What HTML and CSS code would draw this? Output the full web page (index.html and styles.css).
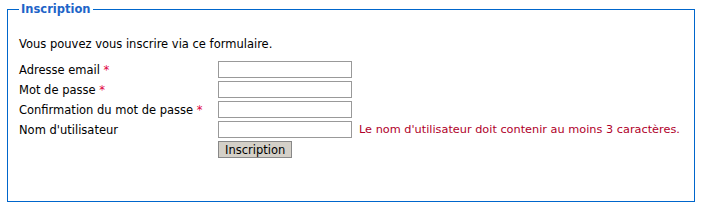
FILE: index.html
```html
<!DOCTYPE html>
<html lang="fr">
<head>
    <meta charset="UTF-8">
    <title>Inscription</title>
    <link rel="stylesheet" href="styles.css">
</head>
<body>
    <form class="signup" action="#" method="post">
        <fieldset class="box">
            <legend class="box-title">Inscription</legend>

            <p class="intro">Vous pouvez vous inscrire via ce formulaire.</p>

            <div class="fields">
                <label class="label" for="email">Adresse email <span class="req">*</span></label>
                <input class="field" type="text" id="email" name="email">
                <span></span>

                <label class="label" for="pass">Mot de passe <span class="req">*</span></label>
                <input class="field" type="password" id="pass" name="pass">
                <span></span>

                <label class="label" for="pass2">Confirmation du mot de passe <span class="req">*</span></label>
                <input class="field" type="password" id="pass2" name="pass2">
                <span></span>

                <label class="label" for="login">Nom d'utilisateur</label>
                <input class="field" type="text" id="login" name="login">
                <span class="error">Le nom d'utilisateur doit contenir au moins 3 caractères.</span>

                <span></span>
                <div><button class="submit" type="submit">Inscription</button></div>
                <span></span>
            </div>
        </fieldset>
    </form>
</body>
</html>
```

FILE: styles.css
```css
* {
    margin: 0;
    padding: 0;
    box-sizing: border-box;
}

body {
    font-family: Verdana, "DejaVu Sans", sans-serif;
    font-size: 11.5px;
    color: #000;
    background: #fff;
    padding: 2px 10px 0 7px;
}

.box {
    border: 1px solid #0066cc;
    min-width: 0;
    height: 200px;
    padding: 0 11px 0 11px;
}

.box-title {
    color: #1e64c8;
    font-weight: bold;
    font-size: 11.5px;
    padding: 0 2px;
    margin-left: 0;
}

.intro {
    margin-top: 21px;
    line-height: 14px;
}

.fields {
    margin-top: 10px;
    display: grid;
    grid-template-columns: 199px 134px auto;
    grid-auto-rows: 20px;
    align-items: start;
}

.label {
    line-height: 14px;
    padding-top: 2px;
}

.req {
    color: #e0003c;
}

.field {
    width: 134px;
    height: 17px;
    border: 1px solid #999;
    background: #fff;
    font: inherit;
    padding: 0 2px;
}

.error {
    color: #b0002a;
    font-size: 11.3px;
    line-height: 14px;
    padding-top: 2px;
    padding-left: 7px;
    white-space: nowrap;
}

.submit {
    font: inherit;
    font-size: 11.5px;
    background: #d4d0c8;
    border: 1px solid #888;
    height: 17px;
    padding: 0 6px;
    color: #000;
}
```
